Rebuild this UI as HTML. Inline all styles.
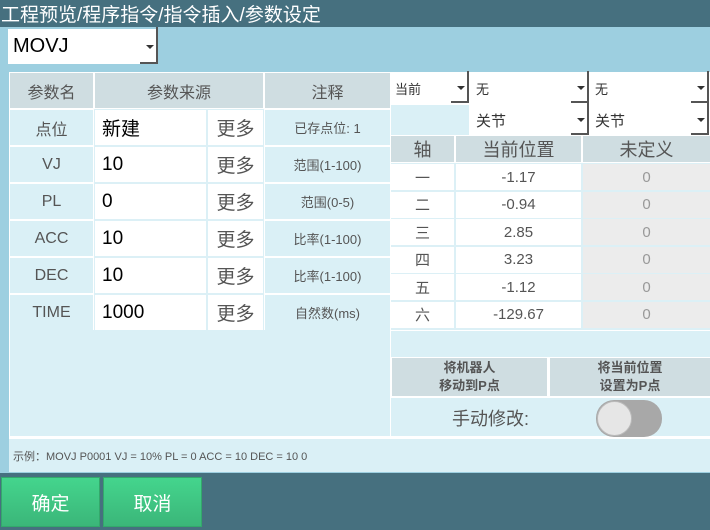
<!DOCTYPE html>
<html><head><meta charset="utf-8"><style>
*{box-sizing:border-box;margin:0;padding:0}
body{width:710px;height:530px;overflow:hidden;background:#9dcfe0;font-family:"Liberation Sans","Noto Sans CJK SC",sans-serif;position:relative;color:#444}
.a{position:absolute;display:flex;align-items:center;justify-content:center}
.h{background:#cfdde1;color:#555;font-size:16px}
.l{background:#daf0f6;color:#555;font-size:16px}
.w{background:#fff;color:#000;font-size:19px}
.dd{background:#fff;justify-content:flex-start;padding-left:4px;font-size:13px;color:#333}
.dd:after{content:"";position:absolute;right:4px;top:50%;border:4px solid transparent;border-top:4px solid #333;margin-top:-2px}
.dd:before{content:"";position:absolute;right:0;bottom:0;width:16px;height:100%;border-right:2px solid #555;border-bottom:2px solid #555}
</style></head><body>
<div class="a" style="left:0;top:0;width:710px;height:27px;background:#46707f;color:#fff;font-size:19px;justify-content:flex-start;padding-left:1px">工程预览/程序指令/指令插入/参数设定</div>
<div class="a dd" style="left:8px;top:29px;width:150px;height:35px;font-size:20px;color:#000;padding-left:5px">MOVJ</div>
<div style="position:absolute;left:9px;top:72px;width:382px;height:365px;background:#fff"></div>
<div style="position:absolute;left:94px;top:109px;width:170px;height:221px;background:#dcf0f6"></div>
<div style="position:absolute;left:10px;top:330px;width:380px;height:106px;background:#daf0f6"></div>
<div class="a h" style="left:10px;top:73px;width:83px;height:35px">参数名</div>
<div class="a h" style="left:95px;top:73px;width:168px;height:35px">参数来源</div>
<div class="a h" style="left:265px;top:73px;width:125px;height:35px">注释</div>
<div id="rows"></div>
<div class="a l" style="left:9px;top:437px;width:701px;height:35px;font-size:11px;justify-content:flex-start;padding-left:4px;border-top:2px solid #fff">示例：MOVJ P0001 VJ = 10% PL = 0 ACC = 10 DEC = 10 0</div>
<div style="position:absolute;left:391px;top:72px;width:319px;height:365px;background:#fff"></div>
<div style="position:absolute;left:391px;top:163px;width:319px;height:167px;background:#dcf0f6"></div>
<div class="a dd" style="left:391px;top:73px;width:78px;height:30px">当前</div>
<div class="a dd" style="left:472px;top:73px;width:117px;height:30px">无</div>
<div class="a dd" style="left:591px;top:73px;width:118px;height:30px">无</div>
<div class="a l" style="left:391px;top:105px;width:78px;height:30px"></div>
<div class="a dd" style="left:472px;top:105px;width:117px;height:30px;font-size:15px">关节</div>
<div class="a dd" style="left:591px;top:105px;width:118px;height:30px;font-size:15px">关节</div>
<div class="a h" style="left:391px;top:136px;width:63px;height:26px;font-size:18px">轴</div>
<div class="a h" style="left:456px;top:136px;width:125px;height:26px;font-size:18px">当前位置</div>
<div class="a h" style="left:583px;top:136px;width:127px;height:26px;font-size:18px">未定义</div>
<div id="r2"></div>
<div class="a l" style="left:391px;top:331px;width:319px;height:26px"></div>
<div class="a h" style="left:392px;top:358px;width:155px;height:38px;font-size:13px;font-weight:bold;line-height:18px;text-align:center">将机器人<br>移动到P点</div>
<div class="a h" style="left:550px;top:358px;width:160px;height:38px;font-size:13px;font-weight:bold;line-height:18px;text-align:center">将当前位置<br>设置为P点</div>
<div class="a l" style="left:391px;top:398px;width:319px;height:38px"></div>
<div class="a" style="left:452px;top:405px;font-size:18px;color:#555">手动修改:</div>
<div style="position:absolute;left:596px;top:400px;width:66px;height:37px;border-radius:18px;background:#a8a8a8"></div>
<div style="position:absolute;left:597px;top:401px;width:35px;height:35px;border-radius:50%;background:#e6e6e6;border:1px solid #bbb"></div>
<div style="position:absolute;left:0;top:473px;width:710px;height:57px;background:#46707f"></div>
<div class="a" style="left:1px;top:477px;width:99px;height:50px;background:linear-gradient(#44d58d,#3bb679);color:#fff;font-size:19px;border:1px solid #33a86b">确定</div>
<div class="a" style="left:103px;top:477px;width:99px;height:50px;background:linear-gradient(#44d58d,#3bb679);color:#fff;font-size:19px;border:1px solid #33a86b">取消</div>
<script>
var R=[["点位","新建","已存点位: 1"],["VJ","10","范围(1-100)"],["PL","0","范围(0-5)"],["ACC","10","比率(1-100)"],["DEC","10","比率(1-100)"],["TIME","1000","自然数(ms)"]];
var h="";R.forEach(function(r,i){var y=110+i*37;
h+='<div class="a l" style="left:10px;top:'+y+'px;width:83px;height:35px">'+r[0]+'</div>';
h+='<div class="a w" style="left:95px;top:'+y+'px;width:111px;height:35px;justify-content:flex-start;padding-left:7px">'+r[1]+'</div>';
h+='<div class="a w" style="left:208px;top:'+y+'px;width:55px;height:35px;color:#555">更多</div>';
h+='<div class="a l" style="left:265px;top:'+y+'px;width:125px;height:35px;font-size:13px">'+r[2]+'</div>';});
document.getElementById("rows").outerHTML=h;
var A=[["一","-1.17"],["二","-0.94"],["三","2.85"],["四","3.23"],["五","-1.12"],["六","-129.67"]];h="";
A.forEach(function(r,i){var y=164+i*27.5;
h+='<div class="a" style="left:391px;top:'+y+'px;width:63px;height:26px;background:#fff;font-size:15px;color:#555">'+r[0]+'</div>';
h+='<div class="a" style="left:456px;top:'+y+'px;width:125px;height:26px;background:#fff;font-size:15px;color:#555">'+r[1]+'</div>';
h+='<div class="a" style="left:583px;top:'+y+'px;width:127px;height:26px;background:#ececec;font-size:15px;color:#999">0</div>';});
document.getElementById("r2").outerHTML=h;
</script>
</body></html>
